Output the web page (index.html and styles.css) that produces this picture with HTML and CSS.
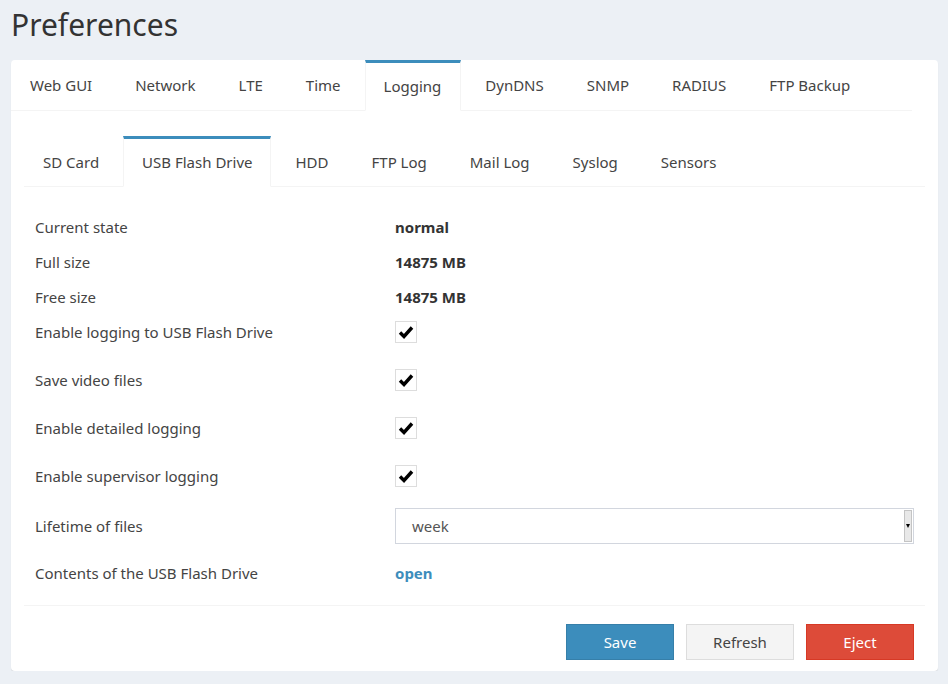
FILE: index.html
```html
<!DOCTYPE html>
<html lang="en">
<head>
  <meta charset="UTF-8">
  <title>Preferences</title>
  <link rel="stylesheet" href="styles.css">
</head>
<body>

  <h1 class="page-title">Preferences</h1>

  <div class="card">
    <!-- Top level sections -->
    <ul class="tabs tabs-main">
      <li><a href="#">Web GUI</a></li>
      <li><a href="#">Network</a></li>
      <li><a href="#">LTE</a></li>
      <li><a href="#">Time</a></li>
      <li class="active"><a href="#">Logging</a></li>
      <li><a href="#">DynDNS</a></li>
      <li><a href="#">SNMP</a></li>
      <li><a href="#">RADIUS</a></li>
      <li><a href="#">FTP Backup</a></li>
    </ul>

    <div class="card-body">
      <!-- Logging targets -->
      <ul class="tabs tabs-sub">
        <li><a href="#">SD Card</a></li>
        <li class="active"><a href="#">USB Flash Drive</a></li>
        <li><a href="#">HDD</a></li>
        <li><a href="#">FTP Log</a></li>
        <li><a href="#">Mail Log</a></li>
        <li><a href="#">Syslog</a></li>
        <li><a href="#">Sensors</a></li>
      </ul>

      <div class="form">
        <div class="row">
          <div class="label">Current state</div>
          <div class="value">normal</div>
        </div>
        <div class="row">
          <div class="label">Full size</div>
          <div class="value">14875 MB</div>
        </div>
        <div class="row">
          <div class="label">Free size</div>
          <div class="value">14875 MB</div>
        </div>
        <div class="row row-check">
          <div class="label">Enable logging to USB Flash Drive</div>
          <div class="value">
            <span class="checkbox"><svg viewBox="0 0 16 16" width="16" height="16"><path d="M2 8.5 L6 12.5 L14 3.5" fill="none" stroke="#000" stroke-width="3.4"/></svg></span>
          </div>
        </div>
        <div class="row row-check">
          <div class="label">Save video files</div>
          <div class="value">
            <span class="checkbox"><svg viewBox="0 0 16 16" width="16" height="16"><path d="M2 8.5 L6 12.5 L14 3.5" fill="none" stroke="#000" stroke-width="3.4"/></svg></span>
          </div>
        </div>
        <div class="row row-check">
          <div class="label">Enable detailed logging</div>
          <div class="value">
            <span class="checkbox"><svg viewBox="0 0 16 16" width="16" height="16"><path d="M2 8.5 L6 12.5 L14 3.5" fill="none" stroke="#000" stroke-width="3.4"/></svg></span>
          </div>
        </div>
        <div class="row row-check">
          <div class="label">Enable supervisor logging</div>
          <div class="value">
            <span class="checkbox"><svg viewBox="0 0 16 16" width="16" height="16"><path d="M2 8.5 L6 12.5 L14 3.5" fill="none" stroke="#000" stroke-width="3.4"/></svg></span>
          </div>
        </div>
        <div class="row row-check row-select">
          <div class="label">Lifetime of files</div>
          <div class="value">
            <div class="select">
              <span>week</span>
              <span class="select-arrow"></span>
            </div>
          </div>
        </div>
        <div class="row">
          <div class="label">Contents of the USB Flash Drive</div>
          <div class="value"><a class="link" href="#">open</a></div>
        </div>
      </div>

      <div class="actions">
        <button class="btn btn-primary">Save</button>
        <button class="btn btn-default">Refresh</button>
        <button class="btn btn-danger">Eject</button>
      </div>
    </div>
  </div>

</body>
</html>
```

FILE: styles.css
```css
body {
  margin: 0;
  padding: 0 10px 0 11px;
  background: #ecf0f5;
  font-family: "Noto Sans", sans-serif;
  font-size: 15px;
  color: #444;
}

.page-title {
  margin: 0;
  padding: 5px 0 0 0;
  height: 60px;
  box-sizing: border-box;
  font-size: 30px;
  font-weight: normal;
  color: #333;
  line-height: 40px;
}

.card {
  background: white;
  border-radius: 4px;
  box-shadow: 0 1px 1px rgba(0,0,0,0.1);
  width: 927px;
}

.tabs {
  list-style: none;
  margin: 0;
  padding: 0;
  display: flex;
  border-bottom: 1px solid #f4f4f4;
}

.tabs li {
  margin-right: 5px;
  margin-bottom: -1px;
  border-top: 3px solid transparent;
  border-left: 1px solid transparent;
  border-right: 1px solid transparent;
}

.tabs li a {
  display: block;
  padding: 0 18px;
  color: #444;
  text-decoration: none;
}

.tabs li.active {
  border-top-color: #3c8dbc;
  border-left-color: #f4f4f4;
  border-right-color: #f4f4f4;
  background: white;
}

.tabs-main {
  margin-right: 26px;
}

.tabs-main li {
  border-top-width: 0;
  border-bottom: 1px solid transparent;
}

.tabs-main li a {
  line-height: 50px;
}

.tabs-main li.active {
  border-top: 3px solid #3c8dbc;
  border-bottom-color: white;
}

.tabs-main li.active a {
  line-height: 47px;
  padding: 0 19px 0 18px;
}

.card-body {
  padding: 25px 13px 11px 13px;
}

.tabs-sub li {
  border-bottom: 1px solid transparent;
}

.tabs-sub li a {
  line-height: 47px;
}

.tabs-sub li.active {
  border-bottom-color: white;
}

.form {
  padding: 22px 11px 0 11px;
}

.row {
  display: flex;
  align-items: center;
  min-height: 35px;
}

.row-check {
  margin-bottom: 13px;
}

.row-select {
  padding-top: 2px;
  margin-bottom: 11px;
}

.label {
  width: 360px;
}

.value {
  flex: 1;
  font-weight: bold;
  color: #333;
}

.checkbox {
  display: inline-flex;
  align-items: center;
  justify-content: center;
  width: 20px;
  height: 20px;
  margin-top: 1px;
  border: 1px solid #ddd;
  vertical-align: middle;
}

.select {
  display: flex;
  align-items: center;
  justify-content: space-between;
  height: 36px;
  box-sizing: border-box;
  border: 1px solid #d2d6de;
  padding-left: 16px;
  font-weight: normal;
  color: #555;
}

.select-arrow {
  position: relative;
  width: 8px;
  height: 32px;
  margin-right: 1px;
  background: #e8e8e8;
  border: 1px solid #c4c4c4;
  box-sizing: border-box;
}

.select-arrow::after {
  content: "";
  position: absolute;
  left: 1px;
  top: 13px;
  border-left: 2.5px solid transparent;
  border-right: 2.5px solid transparent;
  border-top: 4px solid #000;
}

.link {
  color: #3c8dbc;
  text-decoration: none;
}

.actions {
  display: flex;
  justify-content: flex-end;
  gap: 12px;
  margin-top: 15px;
  padding: 18px 11px 0 0;
  border-top: 1px solid #f4f4f4;
}

.btn {
  width: 108px;
  height: 36px;
  font-family: inherit;
  font-size: 15px;
  border: 1px solid;
  cursor: pointer;
}

.btn-primary {
  background: #3c8dbc;
  border-color: #367fa9;
  color: white;
}

.btn-default {
  background: #f4f4f4;
  border-color: #ddd;
  color: #444;
}

.btn-danger {
  background: #dd4b39;
  border-color: #d73925;
  color: white;
}
```
